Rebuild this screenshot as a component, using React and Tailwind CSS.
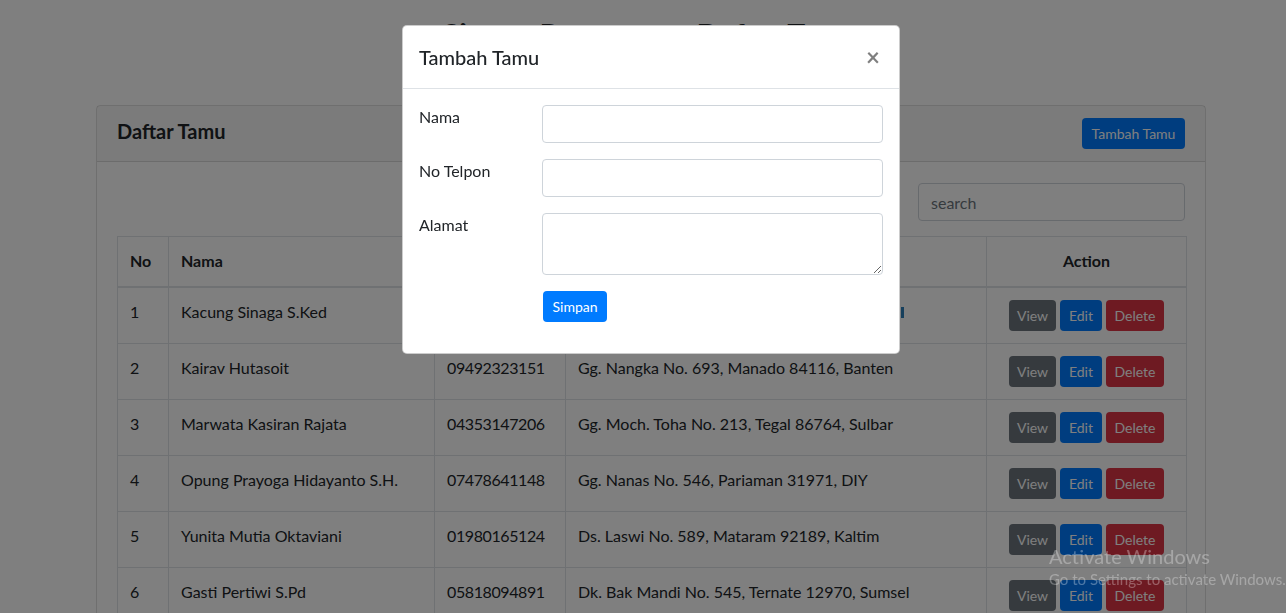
import React from 'react';

const GUESTS = [
  { no: 1, nama: 'Kacung Sinaga S.Ked', telp: '08214567890', alamat: 'Jln. Sudirman No. 12, Medan 20112, Sumut' },
  { no: 2, nama: 'Kairav Hutasoit', telp: '09492323151', alamat: 'Gg. Nangka No. 693, Manado 84116, Banten' },
  { no: 3, nama: 'Marwata Kasiran Rajata', telp: '04353147206', alamat: 'Gg. Moch. Toha No. 213, Tegal 86764, Sulbar' },
  { no: 4, nama: 'Opung Prayoga Hidayanto S.H.', telp: '07478641148', alamat: 'Gg. Nanas No. 546, Pariaman 31971, DIY' },
  { no: 5, nama: 'Yunita Mutia Oktaviani', telp: '01980165124', alamat: 'Ds. Laswi No. 589, Mataram 92189, Kaltim' },
  { no: 6, nama: 'Gasti Pertiwi S.Pd', telp: '05818094891', alamat: 'Dk. Bak Mandi No. 545, Ternate 12970, Sumsel' },
];

const FONT = "font-['Segoe_UI','Lato','Noto_Sans',sans-serif]";

function GuestTable() {
  return (
    <table className="w-[1069px] table-fixed border-collapse text-[16px] text-[#212529]">
      <thead>
        <tr>
          <th className="w-[51px] border border-[#dee2e6] border-b-2 px-3 pt-3 pb-[13px] text-left font-bold leading-6">No</th>
          <th className="w-[266px] border border-[#dee2e6] border-b-2 px-3 pt-3 pb-[13px] text-left font-bold leading-6">Nama</th>
          <th className="w-[131px] border border-[#dee2e6] border-b-2 px-3 pt-3 pb-[13px] text-left font-bold leading-6">No Telpon</th>
          <th className="w-[421px] border border-[#dee2e6] border-b-2 px-3 pt-3 pb-[13px] text-left font-bold leading-6">Alamat</th>
          <th className="w-[200px] border border-[#dee2e6] border-b-2 px-3 pt-3 pb-[13px] text-center font-bold leading-6">Action</th>
        </tr>
      </thead>
      <tbody>
        {GUESTS.map((g) => (
          <tr key={g.no}>
            <td className="border border-[#dee2e6] px-3 py-3 leading-6 align-top">{g.no}</td>
            <td className="border border-[#dee2e6] px-3 py-3 leading-6 align-top whitespace-nowrap">{g.nama}</td>
            <td className="border border-[#dee2e6] px-3 py-3 leading-6 align-top tracking-[-0.4px]">{g.telp}</td>
            <td className="border border-[#dee2e6] px-3 py-3 leading-6 align-top whitespace-nowrap">
              {g.no === 1 ? (
                <span className="flex items-center">
                  <span className="w-[323px] overflow-hidden">{g.alamat}</span>
                  <span className="inline-block w-[3px] h-[11px] bg-[#2c7fb8]" />
                </span>
              ) : (
                g.alamat
              )}
            </td>
            <td className="border border-[#dee2e6] px-3 py-3 align-top">
              <div className="flex justify-center gap-1">
                <button className="w-[47px] h-[31px] rounded bg-[#6c757d] text-white text-[14px]">View</button>
                <button className="w-[42px] h-[31px] rounded bg-[#007bff] text-white text-[14px]">Edit</button>
                <button className="w-[58px] h-[31px] rounded bg-[#dc3545] text-white text-[14px]">Delete</button>
              </div>
            </td>
          </tr>
        ))}
      </tbody>
    </table>
  );
}

function Modal() {
  return (
    <div className="fixed inset-0 bg-black/50 overflow-hidden">
      <div className="w-[1302px]">
        <div className="ml-[402px] mt-[25px] w-[498px] bg-white rounded-[5px] border border-black/20 text-[#212529]">
          <div className="flex items-center justify-between px-4 py-4 border-b border-[#dee2e6]">
            <h5 className="text-[20px] leading-[30px] font-medium">Tambah Tamu</h5>
            <span className="text-[24px] leading-none font-bold text-black/50 pr-[3px]">×</span>
          </div>
          <div className="px-4 pt-4 pb-4">
            <div className="flex mb-4">
              <label className="w-[124px] leading-6">Nama</label>
              <input className="w-[342px] h-[38px] border border-[#ced4da] rounded px-3" />
            </div>
            <div className="flex mb-4">
              <label className="w-[124px] leading-6">No Telpon</label>
              <input className="w-[342px] h-[38px] border border-[#ced4da] rounded px-3" />
            </div>
            <div className="flex mb-4">
              <label className="w-[124px] leading-6">Alamat</label>
              <textarea rows={2} className="w-[342px] h-[62px] border border-[#ced4da] rounded px-3 py-1.5" />
            </div>
            <div className="flex mb-[15px]">
              <div className="w-[124px]" />
              <button className="w-[64px] h-[31px] rounded bg-[#007bff] text-white text-[14px]">Simpan</button>
            </div>
          </div>
        </div>
      </div>
      <div className="absolute left-[1049px] top-[542px] text-white/30 whitespace-nowrap">
        <div className="text-[20px] leading-[28px]">Activate Windows</div>
        <div className="text-[15px] leading-[18px]">Go to Settings to activate Windows.</div>
      </div>
    </div>
  );
}

export default function App() {
  return (
    <div className={`min-h-screen bg-white overflow-hidden ${FONT}`}>
      <div className="w-[1302px] flex flex-col items-center">
        <h2 className="mt-[16px] text-[30px] leading-[36px] font-bold text-[#212529]">Sistem Pencatatan Daftar Tamu</h2>
        <div className="mt-[53px] w-[1110px] border border-black/[0.125] rounded">
          <div className="flex items-center justify-between px-5 py-3 bg-black/[0.03] border-b border-black/[0.125]">
            <h5 className="text-[20px] leading-[30px] font-bold text-[#212529] -mt-[6px]">Daftar Tamu</h5>
            <button className="w-[103px] h-[31px] rounded bg-[#007bff] text-white text-[14px]">Tambah Tamu</button>
          </div>
          <div className="px-5 pt-[21px] pb-5">
            <div className="flex justify-end mb-[15px]">
              <input placeholder="search" className="w-[267px] h-[38px] border border-[#ced4da] rounded px-3 text-[16px] placeholder:text-[#6c757d]" />
            </div>
            <GuestTable />
          </div>
        </div>
      </div>
      <Modal />
    </div>
  );
}
